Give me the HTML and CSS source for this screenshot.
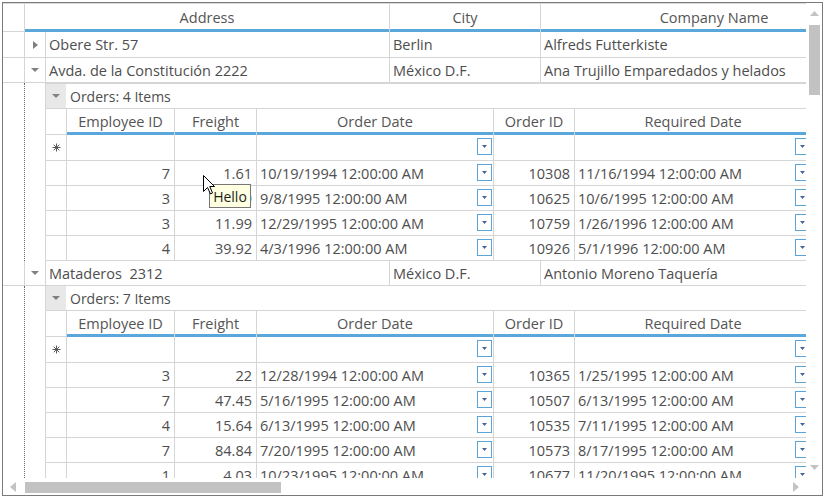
FILE: index.html
```html
<!DOCTYPE html>
<html>
<head>
<meta charset="utf-8">
<link rel="stylesheet" href="styles.css">
</head>
<body>
<div class="grid">
  <div class="viewport">
    <div class="thead">
      <div class="hind"></div>
      <div class="hcell w-addr-span"><span class="hlabel">Address</span><span class="hbar"></span></div>
      <div class="hcell w-city"><span class="hlabel">City</span><span class="hbar"></span></div>
      <div class="hcell w-comp"><span class="hlabel">Company Name</span><span class="hbar"></span></div>
    </div>

    <div class="row row-first">
      <div class="cell ind"></div>
      <div class="cell exp"><svg width="5" height="8" viewBox="0 0 5 8"><polygon points="0,0 5,4 0,8" fill="#808080"/></svg></div>
      <div class="cell w-addr">Obere Str. 57</div>
      <div class="cell w-city">Berlin</div>
      <div class="cell w-comp">Alfreds Futterkiste</div>
    </div>
    <div class="row">
      <div class="cell ind"></div>
      <div class="cell exp"><svg width="8" height="4" viewBox="0 0 8 4"><polygon points="0,0 8,0 4,4" fill="#808080"/></svg></div>
      <div class="cell w-addr">Avda. de la Constitución 2222</div>
      <div class="cell w-city">México D.F.</div>
      <div class="cell w-comp">Ana Trujillo Emparedados y helados</div>
    </div>

    <div class="detail">
      <div class="gutter"></div>
      <div class="gutter2"></div>
      <div class="dgrid">
        <div class="grow grow-first">
          <div class="gexp"><svg width="8" height="4" viewBox="0 0 8 4"><polygon points="0,0 8,0 4,4" fill="#808080"/></svg></div>
          <span class="gtext">Orders: 4 Items</span>
        </div>
        <div class="dhead">
          <div class="dhind"></div>
          <div class="hcell dw-emp"><span class="hlabel">Employee ID</span><span class="hbar"></span></div>
          <div class="hcell dw-fr"><span class="hlabel">Freight</span><span class="hbar"></span></div>
          <div class="hcell dw-od"><span class="hlabel">Order Date</span><span class="hbar"></span></div>
          <div class="hcell dw-oid"><span class="hlabel">Order ID</span><span class="hbar"></span></div>
          <div class="hcell dw-rd"><span class="hlabel">Required Date</span><span class="hbar"></span></div>
        </div>
        <div class="drow drow-new">
          <div class="dcell dind"><svg width="9" height="9" viewBox="0 0 9 9"><path d="M4.5 0.5V8.5M0.5 4.5H8.5M1.7 1.7L7.3 7.3M7.3 1.7L1.7 7.3" stroke="#5a5a5a" stroke-width="1"/></svg></div>
          <div class="dcell dw-emp num"></div>
          <div class="dcell dw-fr num"></div>
          <div class="dcell dw-od"><span class="txt"></span><span class="dd"><svg width="5" height="3" viewBox="0 0 5 3"><polygon points="0,0 5,0 2.5,3" fill="#44649a"/></svg></span></div>
          <div class="dcell dw-oid num"></div>
          <div class="dcell dw-rd"><span class="txt"></span><span class="dd"><svg width="5" height="3" viewBox="0 0 5 3"><polygon points="0,0 5,0 2.5,3" fill="#44649a"/></svg></span></div>
        </div>
        <div class="drow">
          <div class="dcell dind"></div>
          <div class="dcell dw-emp num">7</div>
          <div class="dcell dw-fr num">1.61</div>
          <div class="dcell dw-od"><span class="txt">10/19/1994 12:00:00 AM</span><span class="dd"><svg width="5" height="3" viewBox="0 0 5 3"><polygon points="0,0 5,0 2.5,3" fill="#44649a"/></svg></span></div>
          <div class="dcell dw-oid num">10308</div>
          <div class="dcell dw-rd"><span class="txt">11/16/1994 12:00:00 AM</span><span class="dd"><svg width="5" height="3" viewBox="0 0 5 3"><polygon points="0,0 5,0 2.5,3" fill="#44649a"/></svg></span></div>
        </div>
        <div class="drow">
          <div class="dcell dind"></div>
          <div class="dcell dw-emp num">3</div>
          <div class="dcell dw-fr num">43.9</div>
          <div class="dcell dw-od"><span class="txt">9/8/1995 12:00:00 AM</span><span class="dd"><svg width="5" height="3" viewBox="0 0 5 3"><polygon points="0,0 5,0 2.5,3" fill="#44649a"/></svg></span></div>
          <div class="dcell dw-oid num">10625</div>
          <div class="dcell dw-rd"><span class="txt">10/6/1995 12:00:00 AM</span><span class="dd"><svg width="5" height="3" viewBox="0 0 5 3"><polygon points="0,0 5,0 2.5,3" fill="#44649a"/></svg></span></div>
        </div>
        <div class="drow">
          <div class="dcell dind"></div>
          <div class="dcell dw-emp num">3</div>
          <div class="dcell dw-fr num">11.99</div>
          <div class="dcell dw-od"><span class="txt">12/29/1995 12:00:00 AM</span><span class="dd"><svg width="5" height="3" viewBox="0 0 5 3"><polygon points="0,0 5,0 2.5,3" fill="#44649a"/></svg></span></div>
          <div class="dcell dw-oid num">10759</div>
          <div class="dcell dw-rd"><span class="txt">1/26/1996 12:00:00 AM</span><span class="dd"><svg width="5" height="3" viewBox="0 0 5 3"><polygon points="0,0 5,0 2.5,3" fill="#44649a"/></svg></span></div>
        </div>
        <div class="drow">
          <div class="dcell dind"></div>
          <div class="dcell dw-emp num">4</div>
          <div class="dcell dw-fr num">39.92</div>
          <div class="dcell dw-od"><span class="txt">4/3/1996 12:00:00 AM</span><span class="dd"><svg width="5" height="3" viewBox="0 0 5 3"><polygon points="0,0 5,0 2.5,3" fill="#44649a"/></svg></span></div>
          <div class="dcell dw-oid num">10926</div>
          <div class="dcell dw-rd"><span class="txt">5/1/1996 12:00:00 AM</span><span class="dd"><svg width="5" height="3" viewBox="0 0 5 3"><polygon points="0,0 5,0 2.5,3" fill="#44649a"/></svg></span></div>
        </div>
      </div>
    </div>

    <div class="row">
      <div class="cell ind"></div>
      <div class="cell exp"><svg width="8" height="4" viewBox="0 0 8 4"><polygon points="0,0 8,0 4,4" fill="#808080"/></svg></div>
      <div class="cell w-addr">Mataderos&nbsp; 2312</div>
      <div class="cell w-city">México D.F.</div>
      <div class="cell w-comp">Antonio Moreno Taquería</div>
    </div>

    <div class="detail">
      <div class="gutter"></div>
      <div class="gutter2"></div>
      <div class="dgrid">
        <div class="grow">
          <div class="gexp"><svg width="8" height="4" viewBox="0 0 8 4"><polygon points="0,0 8,0 4,4" fill="#808080"/></svg></div>
          <span class="gtext">Orders: 7 Items</span>
        </div>
        <div class="dhead">
          <div class="dhind"></div>
          <div class="hcell dw-emp"><span class="hlabel">Employee ID</span><span class="hbar"></span></div>
          <div class="hcell dw-fr"><span class="hlabel">Freight</span><span class="hbar"></span></div>
          <div class="hcell dw-od"><span class="hlabel">Order Date</span><span class="hbar"></span></div>
          <div class="hcell dw-oid"><span class="hlabel">Order ID</span><span class="hbar"></span></div>
          <div class="hcell dw-rd"><span class="hlabel">Required Date</span><span class="hbar"></span></div>
        </div>
        <div class="drow drow-new">
          <div class="dcell dind"><svg width="9" height="9" viewBox="0 0 9 9"><path d="M4.5 0.5V8.5M0.5 4.5H8.5M1.7 1.7L7.3 7.3M7.3 1.7L1.7 7.3" stroke="#5a5a5a" stroke-width="1"/></svg></div>
          <div class="dcell dw-emp num"></div>
          <div class="dcell dw-fr num"></div>
          <div class="dcell dw-od"><span class="txt"></span><span class="dd"><svg width="5" height="3" viewBox="0 0 5 3"><polygon points="0,0 5,0 2.5,3" fill="#44649a"/></svg></span></div>
          <div class="dcell dw-oid num"></div>
          <div class="dcell dw-rd"><span class="txt"></span><span class="dd"><svg width="5" height="3" viewBox="0 0 5 3"><polygon points="0,0 5,0 2.5,3" fill="#44649a"/></svg></span></div>
        </div>
        <div class="drow">
          <div class="dcell dind"></div>
          <div class="dcell dw-emp num">3</div>
          <div class="dcell dw-fr num">22</div>
          <div class="dcell dw-od"><span class="txt">12/28/1994 12:00:00 AM</span><span class="dd"><svg width="5" height="3" viewBox="0 0 5 3"><polygon points="0,0 5,0 2.5,3" fill="#44649a"/></svg></span></div>
          <div class="dcell dw-oid num">10365</div>
          <div class="dcell dw-rd"><span class="txt">1/25/1995 12:00:00 AM</span><span class="dd"><svg width="5" height="3" viewBox="0 0 5 3"><polygon points="0,0 5,0 2.5,3" fill="#44649a"/></svg></span></div>
        </div>
        <div class="drow">
          <div class="dcell dind"></div>
          <div class="dcell dw-emp num">7</div>
          <div class="dcell dw-fr num">47.45</div>
          <div class="dcell dw-od"><span class="txt">5/16/1995 12:00:00 AM</span><span class="dd"><svg width="5" height="3" viewBox="0 0 5 3"><polygon points="0,0 5,0 2.5,3" fill="#44649a"/></svg></span></div>
          <div class="dcell dw-oid num">10507</div>
          <div class="dcell dw-rd"><span class="txt">6/13/1995 12:00:00 AM</span><span class="dd"><svg width="5" height="3" viewBox="0 0 5 3"><polygon points="0,0 5,0 2.5,3" fill="#44649a"/></svg></span></div>
        </div>
        <div class="drow">
          <div class="dcell dind"></div>
          <div class="dcell dw-emp num">4</div>
          <div class="dcell dw-fr num">15.64</div>
          <div class="dcell dw-od"><span class="txt">6/13/1995 12:00:00 AM</span><span class="dd"><svg width="5" height="3" viewBox="0 0 5 3"><polygon points="0,0 5,0 2.5,3" fill="#44649a"/></svg></span></div>
          <div class="dcell dw-oid num">10535</div>
          <div class="dcell dw-rd"><span class="txt">7/11/1995 12:00:00 AM</span><span class="dd"><svg width="5" height="3" viewBox="0 0 5 3"><polygon points="0,0 5,0 2.5,3" fill="#44649a"/></svg></span></div>
        </div>
        <div class="drow">
          <div class="dcell dind"></div>
          <div class="dcell dw-emp num">7</div>
          <div class="dcell dw-fr num">84.84</div>
          <div class="dcell dw-od"><span class="txt">7/20/1995 12:00:00 AM</span><span class="dd"><svg width="5" height="3" viewBox="0 0 5 3"><polygon points="0,0 5,0 2.5,3" fill="#44649a"/></svg></span></div>
          <div class="dcell dw-oid num">10573</div>
          <div class="dcell dw-rd"><span class="txt">8/17/1995 12:00:00 AM</span><span class="dd"><svg width="5" height="3" viewBox="0 0 5 3"><polygon points="0,0 5,0 2.5,3" fill="#44649a"/></svg></span></div>
        </div>
        <div class="drow">
          <div class="dcell dind"></div>
          <div class="dcell dw-emp num">1</div>
          <div class="dcell dw-fr num">4.03</div>
          <div class="dcell dw-od"><span class="txt">10/23/1995 12:00:00 AM</span><span class="dd"><svg width="5" height="3" viewBox="0 0 5 3"><polygon points="0,0 5,0 2.5,3" fill="#44649a"/></svg></span></div>
          <div class="dcell dw-oid num">10677</div>
          <div class="dcell dw-rd"><span class="txt">11/20/1995 12:00:00 AM</span><span class="dd"><svg width="5" height="3" viewBox="0 0 5 3"><polygon points="0,0 5,0 2.5,3" fill="#44649a"/></svg></span></div>
        </div>
      </div>
    </div>

    <div class="tooltip">Hello</div>
    <svg class="cursor" width="13" height="20" viewBox="0 0 13 20"><path d="M0.5 0.5V16.5L4.5 12.5L7.5 19L9.5 18L6.8 11.5H11.5Z" fill="#ffffff" stroke="#000000" stroke-width="1" stroke-linejoin="miter"/></svg>
  </div>

  <div class="vscroll">
    <div class="varrow varrow-up"><svg width="9" height="5" viewBox="0 0 9 5"><polygon points="0,5 9,5 4.5,0" fill="#c3c3c3"/></svg></div>
    <div class="vthumb"></div>
    <div class="vspace"></div>
    <div class="varrow varrow-down"><svg width="9" height="5" viewBox="0 0 9 5"><polygon points="0,0 9,0 4.5,5" fill="#c3c3c3"/></svg></div>
  </div>
  <div class="hscroll">
    <div class="harrow harrow-left"><svg width="6" height="10" viewBox="0 0 6 10"><polygon points="6,0 6,10 0,5" fill="#c3c3c3"/></svg></div>
    <div class="hthumb"></div>
    <div class="hspace"></div>
    <div class="harrow harrow-right"><svg width="6" height="10" viewBox="0 0 6 10"><polygon points="0,0 0,10 6,5" fill="#c3c3c3"/></svg></div>
  </div>
  <div class="corner"></div>
</div>
</body>
</html>
```

FILE: styles.css
```css
* { box-sizing: border-box; }

html, body {
  margin: 0;
  padding: 0;
  background: #ffffff;
}

body {
  font-family: "Open Sans", "Noto Sans", sans-serif;
  font-size: 14.5px;
  color: #4e4e4e;
}

.grid {
  margin: 2px 0 0 2px;
  width: 821px;
  height: 494px;
  border: 1px solid #7a7a7a;
  display: grid;
  grid-template-columns: 803px 16px;
  grid-template-rows: 475px 17px;
  background: #ffffff;
}

.viewport {
  position: relative;
  overflow: hidden;
  display: flex;
  flex-direction: column;
}

/* ---------- top level header ---------- */
.thead {
  display: flex;
  flex-shrink: 0;
  height: 29px;
  border-top: 1px solid #d9d9d9;
}

.hind {
  flex-shrink: 0;
  width: 22px;
  border-right: 1px solid #d5d5d5;
  border-bottom: 1px solid #d5d5d5;
}

.hcell {
  flex-shrink: 0;
  display: flex;
  flex-direction: column;
  border-right: 1px solid #d5d5d5;
}

.hlabel {
  flex: 1;
  display: flex;
  align-items: center;
  justify-content: center;
  padding-top: 1px;
  white-space: nowrap;
  color: #555555;
}

.hbar {
  height: 3px;
  background: #5aa7dc;
}

.w-addr-span { width: 365px; }
.w-addr { width: 344px; }
.w-city { width: 151px; }
.w-comp { width: 347px; }

/* ---------- top level rows ---------- */
.row {
  display: flex;
  flex-shrink: 0;
  height: 25px;
  border-bottom: 1px solid #d5d5d5;
}

.row-first { height: 26px; }

.cell {
  flex-shrink: 0;
  display: flex;
  align-items: center;
  padding-left: 3px;
  white-space: nowrap;
  border-right: 1px solid #d5d5d5;
}

.cell.ind { width: 22px; padding: 0; }

.cell.exp {
  width: 21px;
  padding: 0;
  justify-content: center;
}

/* ---------- detail block ---------- */
.detail {
  display: flex;
  flex-shrink: 0;
}

.gutter {
  flex-shrink: 0;
  width: 22px;
  border-right: 1px dotted #6a6a6a;
}

.gutter2 {
  flex-shrink: 0;
  width: 20px;
}

.dgrid {
  flex: 1;
  min-width: 0;
  display: flex;
  flex-direction: column;
  border-left: 1px solid #d5d5d5;
}

.grow {
  display: flex;
  height: 25px;
  border-bottom: 1px solid #d5d5d5;
}

.grow-first {
  height: 26px;
  border-top: 1px solid #d5d5d5;
}

.gexp {
  flex-shrink: 0;
  width: 20px;
  background: #e8e8e8;
  display: flex;
  align-items: center;
  justify-content: center;
}

.gtext {
  display: flex;
  align-items: center;
  padding-left: 4px;
  white-space: nowrap;
  font-size: 14px;
}

.dhead {
  display: flex;
  height: 26px;
}

.dhind {
  flex-shrink: 0;
  width: 21px;
  border-right: 1px solid #d5d5d5;
  border-bottom: 1px solid #d5d5d5;
}

.dw-emp { width: 108px; }
.dw-fr { width: 82px; }
.dw-od { width: 237px; }
.dw-oid { width: 81px; }
.dw-rd { width: 237px; }

.drow {
  display: flex;
  height: 25px;
  border-bottom: 1px solid #d5d5d5;
}

.drow-new { height: 26px; }

.dcell {
  flex-shrink: 0;
  display: flex;
  align-items: center;
  padding: 0 3px;
  white-space: nowrap;
  border-right: 1px solid #d5d5d5;
}

.dcell.dind {
  width: 21px;
  padding: 0;
  justify-content: center;
}

.dcell.num {
  justify-content: flex-end;
  padding-right: 4px;
}

.dcell.dw-od,
.dcell.dw-rd {
  padding-right: 1px;
}

.txt {
  flex: 1;
}

.dd {
  flex-shrink: 0;
  width: 15px;
  height: 17px;
  margin-bottom: 2px;
  border: 1px solid #5aa4da;
  background: #ffffff;
  display: flex;
  justify-content: center;
  align-items: flex-start;
  padding-top: 6px;
}

.dd svg { display: block; }

/* ---------- overlay ---------- */
.tooltip {
  position: absolute;
  left: 206px;
  top: 181px;
  width: 42px;
  height: 24px;
  background: #ffffe1;
  border: 1px solid #767676;
  color: #1e1e1e;
  font-size: 14px;
  display: flex;
  align-items: center;
  justify-content: center;
}

.cursor {
  position: absolute;
  left: 200px;
  top: 172px;
}

/* ---------- scrollbars ---------- */
.vscroll {
  display: flex;
  flex-direction: column;
  background: #ffffff;
}

.varrow {
  height: 20px;
  display: flex;
  align-items: center;
  justify-content: center;
  flex-shrink: 0;
}

.varrow-up { height: 22px; align-items: flex-start; padding-top: 8px; }

.vthumb {
  width: 11px;
  height: 70px;
  margin-left: 3px;
  background: #c2c2c2;
  flex-shrink: 0;
}

.vspace { flex: 1; }

.varrow-down { margin-bottom: 1px; }

.hscroll {
  display: flex;
  align-items: flex-start;
  padding-top: 4px;
  background: #ffffff;
}

.harrow {
  display: flex;
  flex-shrink: 0;
}

.harrow-left { margin-left: 7px; width: 15px; }

.hthumb {
  width: 256px;
  height: 11px;
  background: #c2c2c2;
  flex-shrink: 0;
}

.hspace { flex: 1; }

.harrow-right { margin-right: 7px; }

.corner { background: #ffffff; }
```
